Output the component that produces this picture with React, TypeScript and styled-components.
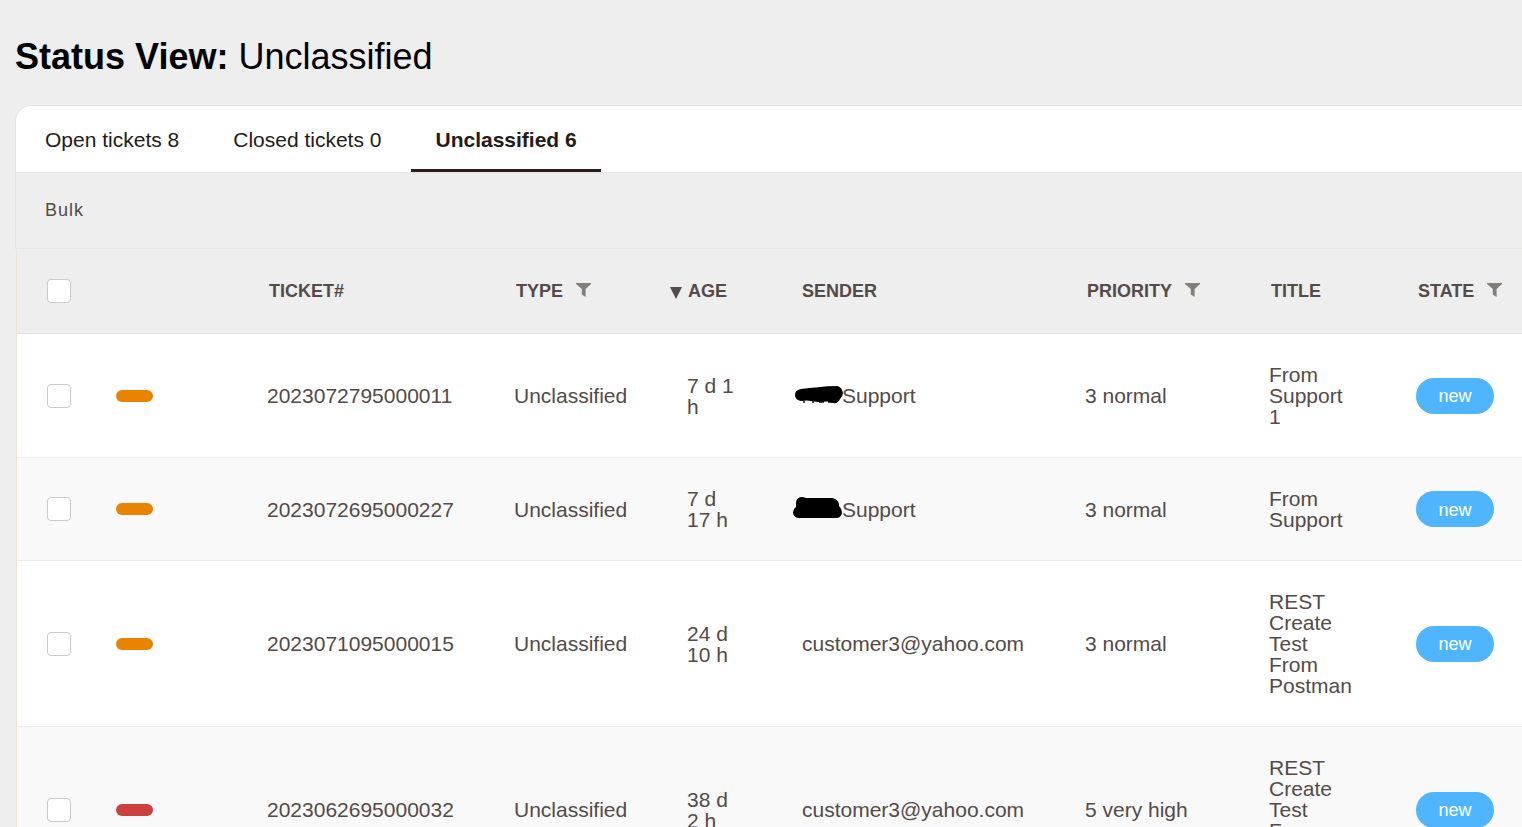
import React from "react";
import styled, { createGlobalStyle } from "styled-components";

const GlobalStyle = createGlobalStyle`
  * { box-sizing: border-box; }
  body {
    margin: 0;
    background: #eeeeee;
    color: #544a49;
    font-family: "Liberation Sans", Arial, Helvetica, sans-serif;
    font-size: 21px;
    line-height: 21px;
  }
`;

const Page = styled.main`
  height: 100vh;
  overflow: hidden;
  padding: 36px 0 0 15px;
`;

const Heading = styled.h1`
  margin: 0 0 28px;
  font-size: 36px;
  line-height: 41px;
  font-weight: 400;
  color: #000;
`;

const Panel = styled.section`
  border-radius: 16px 0 0 0;
`;

const Tabs = styled.nav`
  display: flex;
  gap: 6px;
  padding-left: 5px;
  background: #fff;
  border: 1px solid #e6e4e2;
  border-right: 0;
  border-radius: 16px 0 0 0;
`;

const Tab = styled.a<{ $active?: boolean }>`
  padding: 23px 24px 19px;
  line-height: 21px;
  color: #231b19;
  text-decoration: none;
  white-space: nowrap;
  font-weight: ${(p) => (p.$active ? 700 : 400)};
  border-bottom: 3px solid ${(p) => (p.$active ? "#2a1c18" : "transparent")};
`;

const Actions = styled.div`
  display: flex;
  align-items: center;
  height: 76px;
  padding-left: 29px;
  border-left: 1px solid #e6e4e2;
  border-bottom: 1px solid #e9e5e1;
`;

const ActionButton = styled.button`
  padding: 0;
  border: 0;
  background: none;
  font: inherit;
  font-size: 18px;
  letter-spacing: 1px;
  color: #544a49;
`;

const TableArea = styled.div`
  padding-left: 1px;
  overflow: hidden;
`;

const TicketTable = styled.table`
  width: 100%;
  min-width: 1505px;
  table-layout: fixed;
  border-collapse: separate;
  border-spacing: 0;
  border-left: 1px solid #e9e3dd;
`;

const Column = styled.col<{ $width?: number }>`
  width: ${(p) => (p.$width ? `${p.$width}px` : "auto")};
`;

const HeadCell = styled.th`
  height: 85px;
  padding: 0 0 0 30px;
  border-bottom: 1px solid #e4e2e2;
  font-size: 18px;
  font-weight: 700;
  text-align: left;
  white-space: nowrap;
`;

const HeadLabel = styled.span<{ $flush?: boolean }>`
  display: flex;
  align-items: baseline;
  gap: 13px;
  padding-left: ${(p) => (p.$flush ? 0 : 2)}px;
`;

const SortButton = styled.button`
  display: flex;
  align-items: center;
  gap: 6px;
  margin-left: -17px;
  padding: 0;
  border: 0;
  background: none;
  color: inherit;
  font: inherit;
`;

const FilterButton = styled.button`
  display: flex;
  padding: 0;
  border: 0;
  background: none;
  color: #857d7b;
`;

const Row = styled.tr`
  background: #fff;
  &:nth-child(even) { background: #f9f9f9; }
`;

const Cell = styled.td`
  padding: 30px;
  border-bottom: 1px solid #ececec;
  vertical-align: middle;
`;

const NarrowCell = styled(Cell)`
  padding: 0 0 0 30px;
  white-space: nowrap;
`;

const Check = styled.input`
  display: block;
  appearance: none;
  width: 24px;
  height: 24px;
  margin: 0;
  border: 1px solid #cbc9c9;
  border-radius: 4px;
  background: #fff;
`;

const PriorityBar = styled.span<{ $high?: boolean }>`
  display: block;
  width: 37px;
  height: 12px;
  border-radius: 6px;
  background: ${(p) => (p.$high ? "#cd4040" : "#e98300")};
`;

const Sender = styled.span`
  display: flex;
  align-items: center;
`;

const Scribble = styled.svg`
  display: block;
  flex: none;
  margin: 0 -2px 0 -10px;
`;

const StatePill = styled.span`
  display: flex;
  align-items: center;
  justify-content: center;
  width: 78px;
  height: 36px;
  padding-top: 2px;
  border-radius: 18px;
  background: #50b5ff;
  color: #fff;
  font-size: 18px;
`;

const FilterIcon = () => (
  <svg width="15" height="15" viewBox="0 0 15 15" aria-hidden="true">
    <path d="M0 1H15V2L9.6 7V15L5.8 12.4V7L0 2Z" fill="currentColor" />
  </svg>
);

const SortIcon = () => (
  <svg width="12" height="16" viewBox="0 0 12 16" aria-hidden="true">
    <path d="M0 4H12L6 16Z" fill="currentColor" />
  </svg>
);

const scribbles = [
  <g key="a">
    <path d="M11 18h2M20 18h2M27 18h5M36 18h4" stroke="#544a49" strokeWidth="2" />
    <path d="M9 5C20 4 32 2 45 2Q50 3 51 9Q51 12 48 15Q46 20 41 19L35 17.6L26 18L15 16.6L9 17Q3 16 3 11Q3 6 9 5Z" fill="#000" />
  </g>,
  <path key="b" d="M4 6Q4 1 9 0Q12 0 14 1L40 1Q46 2 47 7L47 9Q50 12 50 16Q49 21 44 21H7Q2 21 1 16Q1 12 4 10Z" fill="#000" />,
];

type Ticket = {
  id: string;
  age: string;
  sender: string;
  hidden?: number;
  priority: string;
  high?: boolean;
  title: string;
};

const tickets: Ticket[] = [
  { id: "2023072795000011", age: "7 d 1 h", sender: "Support", hidden: 0, priority: "3 normal", title: "From Support 1" },
  { id: "2023072695000227", age: "7 d 17 h", sender: "Support", hidden: 1, priority: "3 normal", title: "From Support" },
  { id: "2023071095000015", age: "24 d 10 h", sender: "customer3@yahoo.com", priority: "3 normal", title: "REST Create Test From Postman" },
  { id: "2023062695000032", age: "38 d 2 h", sender: "customer3@yahoo.com", priority: "5 very high", high: true, title: "REST Create Test From Postman" },
];

const columnWidths = [69, 151, 247, 173, 115, 283, 184, 147];

const Head = ({ label, filter, flush }: { label: string; filter?: boolean; flush?: boolean }) => (
  <HeadCell scope="col">
    <HeadLabel $flush={flush}>
      {label}
      {filter && (
        <FilterButton type="button" aria-label={`Filter ${label}`}>
          <FilterIcon />
        </FilterButton>
      )}
    </HeadLabel>
  </HeadCell>
);

export default function App() {
  return (
    <Page>
      <GlobalStyle />
      <Heading>
        <b>Status View:</b> Unclassified
      </Heading>
      <Panel>
        <Tabs>
          <Tab href="#open">Open tickets 8</Tab>
          <Tab href="#closed">Closed tickets 0</Tab>
          <Tab href="#unclassified" $active aria-current="page">Unclassified 6</Tab>
        </Tabs>
        <Actions>
          <ActionButton type="button">Bulk</ActionButton>
        </Actions>
        <TableArea>
          <TicketTable>
            <colgroup>
              {columnWidths.map((w, i) => <Column key={i} $width={w} />)}
              <Column />
            </colgroup>
            <thead>
              <tr>
                <HeadCell><Check type="checkbox" aria-label="Select all tickets" /></HeadCell>
                <HeadCell />
                <Head label="TICKET#" />
                <Head label="TYPE" filter />
                <HeadCell scope="col" aria-sort="descending">
                  <SortButton type="button"><SortIcon />AGE</SortButton>
                </HeadCell>
                <Head label="SENDER" flush />
                <Head label="PRIORITY" filter />
                <Head label="TITLE" />
                <Head label="STATE" filter />
              </tr>
            </thead>
            <tbody>
              {tickets.map((t) => (
                <Row key={t.id}>
                  <NarrowCell><Check type="checkbox" aria-label={`Select ticket ${t.id}`} /></NarrowCell>
                  <NarrowCell><PriorityBar $high={t.high} /></NarrowCell>
                  <NarrowCell>{t.id}</NarrowCell>
                  <NarrowCell>Unclassified</NarrowCell>
                  <Cell>{t.age}</Cell>
                  <NarrowCell>
                    <Sender>
                      {t.hidden !== undefined && (
                        <Scribble width="52" height="24" viewBox="0 0 52 24" aria-hidden="true">
                          {scribbles[t.hidden]}
                        </Scribble>
                      )}
                      {t.sender}
                    </Sender>
                  </NarrowCell>
                  <NarrowCell>{t.priority}</NarrowCell>
                  <Cell>{t.title}</Cell>
                  <NarrowCell><StatePill>new</StatePill></NarrowCell>
                </Row>
              ))}
            </tbody>
          </TicketTable>
        </TableArea>
      </Panel>
    </Page>
  );
}
